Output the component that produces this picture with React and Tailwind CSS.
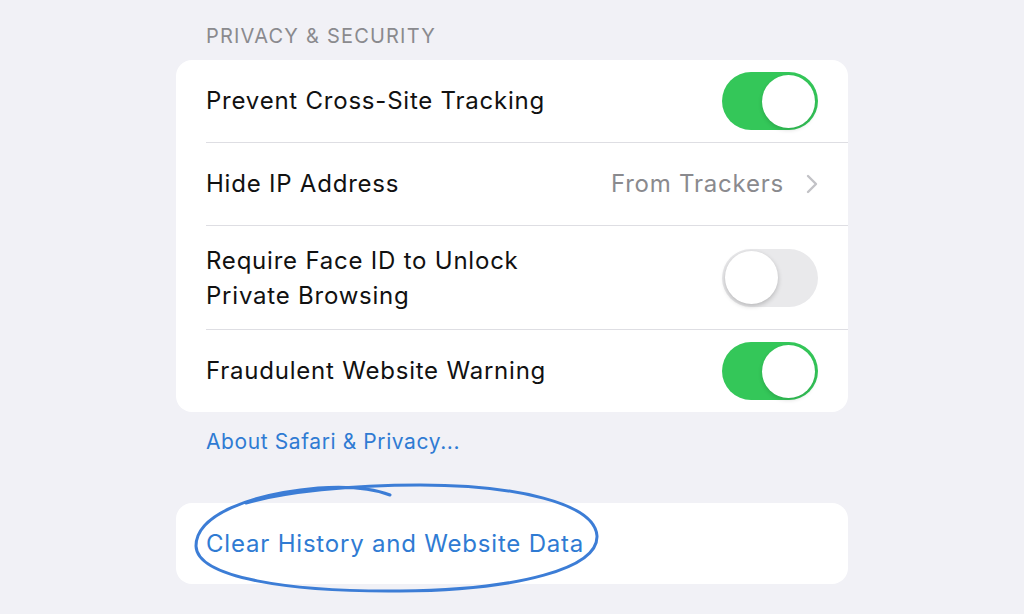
import React from "react";

function Toggle({ on }) {
  return on ? (
    <div className="w-[96px] h-[58px] rounded-full bg-[#34c759] flex items-center justify-end pr-[3px] shrink-0">
      <div className="w-[53px] h-[53px] rounded-full bg-white shadow-[0_2px_4px_rgba(0,0,0,0.15)]" />
    </div>
  ) : (
    <div className="w-[96px] h-[58px] rounded-full bg-[#e9e9eb] flex items-center justify-start pl-[3px] shrink-0">
      <div className="w-[53px] h-[53px] rounded-full bg-white shadow-[0_2px_5px_rgba(0,0,0,0.22)]" />
    </div>
  );
}

function Sep() {
  return <div className="ml-[30px] h-px bg-[#dedee3]" />;
}

export default function App() {
  return (
    <div
      className="relative w-[1024px] h-[614px] bg-[#f1f1f6] overflow-hidden"
      style={{ fontFamily: "Inter, 'Noto Sans', sans-serif" }}
    >
      <div className="ml-[176px] w-[672px] flex flex-col">
        <div className="h-[60px] pl-[30px] pt-[24px] text-[20px] leading-[24px] text-[#8a8a8e] tracking-[1.2px]">
          PRIVACY &amp; SECURITY
        </div>
        <div className="bg-white rounded-[16px] flex flex-col tracking-[0.78px]">
          <div className="h-[82px] pl-[30px] pr-[30px] flex items-center justify-between">
            <span className="text-[24px] text-[#111]">Prevent Cross-Site Tracking</span>
            <Toggle on />
          </div>
          <Sep />
          <div className="h-[82px] pl-[30px] pr-[30px] flex items-center justify-between">
            <span className="text-[24px] text-[#111]">Hide IP Address</span>
            <div className="flex items-center gap-[22px]">
              <span className="text-[24px] text-[#8a8a8e]">From Trackers</span>
              <svg width="12" height="20" viewBox="0 0 12 20">
                <path d="M2 2 L10 10 L2 18" fill="none" stroke="#c2c2c6" strokeWidth="2.4" strokeLinecap="round" strokeLinejoin="round" />
              </svg>
            </div>
          </div>
          <Sep />
          <div className="h-[103px] pl-[30px] pr-[30px] flex items-center justify-between">
            <span className="text-[24px] leading-[35px] text-[#111]">
              Require Face ID to Unlock
              <br />
              Private Browsing
            </span>
            <Toggle on={false} />
          </div>
          <Sep />
          <div className="h-[82px] pl-[30px] pr-[30px] flex items-center justify-between">
            <span className="text-[24px] text-[#111]">Fraudulent Website Warning</span>
            <Toggle on />
          </div>
        </div>
        <div className="pl-[30px] pt-[16px] h-[91px] text-[21px] leading-[28px] text-[#2f7bd3] tracking-[0.6px]">
          About Safari &amp; Privacy...
        </div>
        <div className="bg-white rounded-[16px] h-[81px] pl-[30px] flex items-center tracking-[0.8px]">
          <span className="text-[24px] text-[#2f7bd3]">Clear History and Website Data</span>
        </div>
      </div>
      <svg
        className="absolute left-0 top-0 pointer-events-none"
        width="1024"
        height="614"
        viewBox="0 0 1024 614"
      >
        <path
          d="M390 495 C 372 488, 348 486, 318 488 C 250 494, 196 515, 196 546 C 197 578, 290 592, 400 591 C 520 590, 598 568, 597 536 C 595 503, 515 485, 420 485 C 350 485, 285 492, 246 503"
          fill="none"
          stroke="#3c7dd6"
          strokeWidth="3"
          strokeLinecap="round"
        />
      </svg>
    </div>
  );
}
